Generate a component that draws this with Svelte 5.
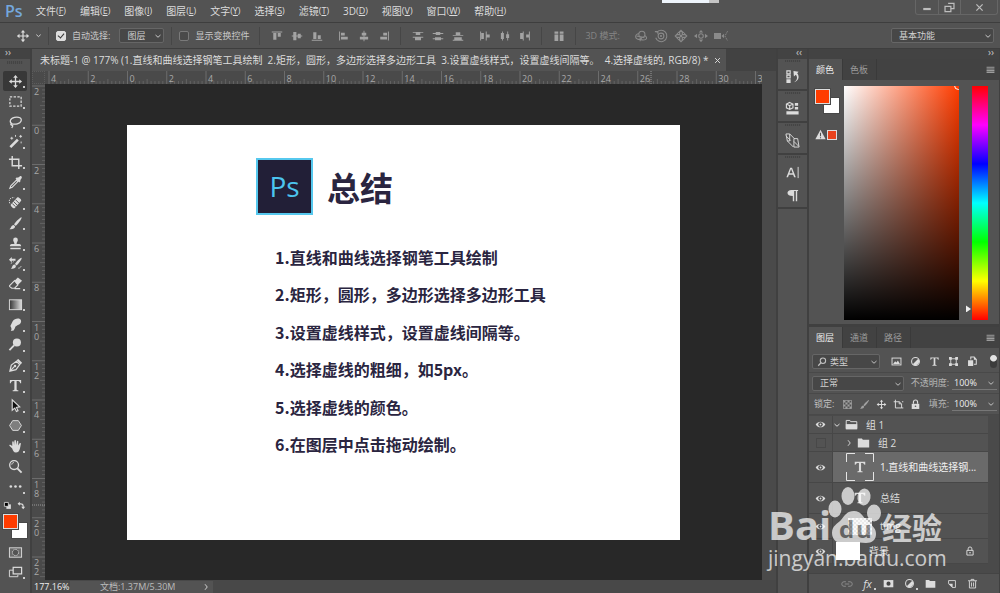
<script>
    const menus = [
        ['文件', 'F'], ['编辑', 'E'], ['图像', 'I'], ['图层', 'L'], ['文字', 'Y'], ['选择', 'S'],
        ['滤镜', 'T'], ['3D', 'D'], ['视图', 'V'], ['窗口', 'W'], ['帮助', 'H'],
    ];

    const line = 'fill="none" stroke="currentColor"';

    // 16x16 glyphs, drawn in currentColor
    const icons = {
        move: `<path d="M8 1l2.500 3H8.700v3.300H12V5.500l3 2.500-3 2.500V8.700H8.700V12h1.800L8 15l-2.500-3h1.800V8.700H4v1.800L1 8l3-2.500v1.800h3.300V4H5.500z"/>`,
        marquee: `<rect x="2" y="3" width="12" height="10" ${line} stroke-width="1.3" stroke-dasharray="2.5 1.500"/>`,
        lasso: `<path d="M4.500 10.500C1 9 2 4.500 7 3.500s8 1 7 4-6.500 4-9.500 3c-1.500-.5-2 .8-1 1.300s2 .2 1.500 1.200L4 15" ${line} stroke-width="1.300"/>`,
        wand: `<path d="M1.500 13L9.500 5l2 2L3.500 15z"/><path d="M4 3v3M2.500 4.500h3M8 1v2M13.500 1v3M12 2.500h3M14 8v2" ${line}/>`,
        crop: `<path d="M4.500 1v10.500H15M1 4.500h10.500V15" ${line} stroke-width="1.500"/>`,
        dropper: `<path d="M8 4l1.500-1.500 1 .5L12.500 1.500c1.500-1 3 .5 2 2L13 5.500l.5 1L12 8z"/><path d="M9 5.500L3 11.500 2 14l2.500-1 6-6z" ${line} stroke-width="1.200"/>`,
        heal: `<path d="M3 10l7-7.500c1-1 5 2.500 4 3.700L7 14c-1 1-5-2.800-4-4z"/><path d="M6 7l4 4M8 5l4 4M4.500 9l3.500 3.500" stroke="#535353"/><path d="M2 9C0 5 3 2 7 3" ${line} stroke-dasharray="1.500 1"/>`,
        brush: `<path d="M14.500 1.500c.8.8-5 8.500-6.500 9L6.500 9C7 7.500 13.500.8 14.500 1.500z M6 9.500L7.500 11c0 3-3.500 3.500-6 3 1.800-.8 1.500-4 4.500-4.500z"/>`,
        stamp: `<path d="M6.800 8.500c.3-1.700-1.300-2.500-1.300-4.300a2.500 2.500 0 015 0c0 1.800-1.600 2.600-1.300 4.300H12c1.500 0 2 1 2 2.500H2c0-1.500.5-2.500 2-2.500z M2.500 12.500h11V14h-11z"/>`,
        history: `<path d="M14.500 2c.8.8-4 7.500-5.500 8L7.500 8.500C8 7 13.800 1.300 14.500 2z M7 9l1.500 1.500c0 3-3 3.500-5.500 3 1.800-.8 1-4 4-4.500z M1 4l3-3v2h4v2H4v2z"/><path d="M3 8l3-2M11 13c2 0 3-1 3-3" ${line} stroke-dasharray="1.500 1"/>`,
        eraser: `<path d="M7 5l3.500-3.500L15 5l-4.500 4.500z"/><path d="M7 5l-5 5c-.6.600-.5 1 .2 1.600L4 13h3l3.500-3.500z M7 13.500h6" ${line} stroke-width="1.200"/>`,
        gradient: `<rect x="1.500" y="3" width="13" height="10.500" fill="url(#ramp)" stroke="currentColor"/>`,
        smudge: `<path d="M2.500 9.500L5 4.500C7 1 13 .5 13.800 3.500S12.500 8 10.500 8.500L8 10c-.5 1.500-1 3-2 4.500L3 15c1-2 1-3-.5-5.500z"/>`,
        dodge: `<circle cx="9.500" cy="5.800" r="4.300"/><path d="M6.500 9l-5 5" ${line} stroke-width="2"/>`,
        pen: `<path d="M2 14l1.500-6.500L9 3.500 12.500 7l-4 5.500z M2 14l5-5" ${line} stroke-width="1.300"/><circle cx="7.500" cy="8.500" r="1.300"/><path d="M9 2.500l2-1.500L15 5l-1.500 2z"/>`,
        type: `<path d="M2 2h12v3.500h-1C12.700 4 12 3.300 9.200 3.300V12c0 .8.500 1 1.800 1v1H5v-1c1.300 0 1.800-.2 1.800-1V3.300C4 3.300 3.300 4 3 5.500H2z"/>`,
        select: `<path d="M4.500 2v11l2.700-2.300L9 14.500l1.700-.8L9 10l3.500-.5z" fill="#111" stroke="currentColor" stroke-width="1.200"/>`,
        polygon: `<path d="M5 2.800h6l3.300 5.200L11 13.200H5L1.700 8z" fill="#7e7e7e" stroke="currentColor"/>`,
        hand: `<path d="M4.500 10L1.500 7.200c-.4-1.200.8-1.300 1.500-.7l1.500 1V3.200c.2-1.300 1.500-1 1.600 0l.4 3.300.3-4.500c.2-1.200 1.600-1.200 1.700 0l.1 4.500.9-3.800c.3-1.200 1.600-.9 1.500.2L10.800 7l1.400-2.300c.7-1 1.800-.4 1.500.6C13 8 13 14.500 8.500 14.500 6 14.500 5.300 12 4.500 10z"/>`,
        zoom: `<circle cx="6.500" cy="6.500" r="4.700" ${line} stroke-width="1.400"/><path d="M4 6c0-1.300 1-2.200 2.300-2.200" ${line}/><path d="M10 10l4.500 4.500" ${line} stroke-width="2"/>`,
        more: `<circle cx="3" cy="8" r="1.400"/><circle cx="8" cy="8" r="1.400"/><circle cx="13" cy="8" r="1.400"/>`,
        defaults: `<path d="M6 6h8v8H6z"/><path d="M2.500 2.500h7v7h-7z" fill="#000" stroke="currentColor" stroke-width="1.500"/>`,
        swap: `<path d="M1 5l4-3.500V4c5 0 7 1 7 6h2.500L11 14.500 7.500 10H10c0-3-1-4-5-4v2.500z"/>`,
        mask: `<rect x="1.500" y="3" width="13" height="10" fill="#6a6a6a" stroke="currentColor"/><circle cx="8" cy="8" r="3.300" fill="#535353" stroke="currentColor" stroke-dasharray="1.500 1"/>`,
        screens: `<path d="M5.500 5.500h-4v7h9v-2" ${line}/><rect x="5.500" y="2.500" width="9" height="7" fill="#535353" stroke="currentColor" stroke-width="1.300"/>`,
        alignTop: `<path d="M1 2h14v1.300H1z M3 4h4.200v9H3z M9 4h4v5H9z"/>`,
        alignMiddle: `<path d="M1 7.400h14v1.200H1z M3 2.500h4.200v11H3z M9 5h4v6H9z"/>`,
        alignBottom: `<path d="M1 13h14v1.300H1z M3 3h4.200v9H3z M9 7h4v5H9z"/>`,
        alignLeft: `<path d="M1.500 2h1.300v12H1.500z M4 3.500h5v3.700H4z M4 9h9v3.700H4z"/>`,
        alignCenter: `<path d="M7.400 1h1.200v14H7.400z M5 3.500h6v3.700H5z M2.500 9h11v3.700h-11z"/>`,
        alignRight: `<path d="M13.200 2h1.300v12h-1.300z M7 3.500h5v3.700H7z M3 9h9v3.700H3z"/>`,
        distTop: `<path d="M1 2.500h14v1.200H1z M5 3.700h6v3H5z M1 9h14v1.200H1z M4 10.200h8v3.300H4z"/>`,
        distMiddle: `<path d="M1 4h14v1.200H1z M5 2.500h6v4H5z M1 11h14v1.200H1z M4 9.500h8v4H4z"/>`,
        distBottom: `<path d="M1 6.500h14v1.200H1z M5 3h6v3.500H5z M1 13h14v1.200H1z M3 9.500h10V13H3z"/>`,
        distLeft: `<path d="M1.500 2h1.300v12H1.500z M3 4h3.500v8H3z M9 2h1.300v12H9z M10.300 6h4v4h-4z"/>`,
        distCenter: `<path d="M4 2h1.200v12H4z M2.500 4h4v8h-4z M11 2h1.200v12H11z M9.500 5.500h4v5h-4z"/>`,
        distRight: `<path d="M5 2h1.300v12H5z M1.500 4H5v8H1.500z M13.200 2h1.300v12h-1.300z M9.500 6h3.700v4H9.500z"/>`,
        autoAlign: `<path d="M2 2h5v3H2z M9 2h5v3H9z M2 6h5v8.500H2z M9 6h5v8.500H9z"/>`,
        orbit: `<circle cx="9" cy="6" r="3.500" ${line} stroke-width="1.200"/><path d="M5.500 5C0 7 1 12 7 12l2-1.500M12.500 7.500c5 4-1 6-5 4.500M7 10v4M3 8l9 2" ${line} stroke-width="1.200"/>`,
        roll: `<circle cx="8" cy="8" r="3.300" ${line} stroke-width="1.200"/><circle cx="8" cy="8" r="1.200"/><path d="M3 4a6.500 6.500 0 11-1 6M1 3h3.500v3" ${line} stroke-width="1.200"/>`,
        pan: `<path d="M8 1.500L10.500 4H9.500v2.500H12V5.500L14.500 8 12 10.500V9.500H9.500V12h1L8 14.500 5.500 12h1V9.500H4v1L1.500 8 4 5.500v1h2.500V4h-1z" ${line} stroke-width="1.400"/><circle cx="8" cy="8" r="1.500"/>`,
        slide: `<circle cx="8" cy="8" r="2.600" ${line} stroke-width="1.200"/><path d="M8 1l2.500 3h-5z M8 15l2.500-3h-5z M0 8l3.500-2.500v5z M16 8l-3.500-2.500v5z"/>`,
        camera: `<path d="M0 4.500h8v7H0z M8.500 8l3-2.500v5z"/><path d="M15.500 2.500L12.500 8l3 5.500" ${line} stroke-dasharray="2 1"/>`,
        actions: `<path d="M2 2h3.500v3H2zM2 6.500h3.500v3H2z" ${line} stroke-width="1.200"/><path d="M1.500 11h4.500v4H1.500z M9.500 14c4-2 4-6 2-8l-2 2L9 2l5.500 1-1.500 1.500c3 3.500 1.500 8.500-3.500 9.500z"/>`,
        props: `<path d="M5 1.500l3.500 1.800v4L5 9 1.500 7.300v-4zM1.500 3.300L5 5l3.500-1.700M5 5v4" ${line} stroke-width="1.200"/><path d="M10.500 2H14v3h-3.500zM10.500 6.500H14v2.500h-3.500zM1.500 11h13v3.500h-13z"/>`,
        clone: `<path d="M1 1h4v7.500H2.500zM5 1l5 5M2.500 8.500L9 15M9.500 6h4l1.500 9H9.500zM1 3l5 5M9.500 9l5 5" ${line}/>`,
        character: `<path d="M5.500 3h2l4 10H9.700l-1-2.700H4.200L3.200 13H1.500z M4.800 8.800h3.400L6.500 4.300z" fill-rule="evenodd"/><path d="M14 2v12" ${line}/>`,
        paragraph: `<path d="M7 2h7v1.300h-1V14h-1.500V3.300H9.800V14H8.300V8.500C1 8.500 1 2 7 2z"/>`,
        image: `<rect x="1.500" y="3" width="13" height="10" ${line} stroke-width="1.400"/><path d="M3 11.500l3-4 2 2 2-3 3 5z"/>`,
        adjust: `<circle cx="8" cy="8" r="5.700" ${line} stroke-width="1.500"/><path d="M12 4a5.700 5.700 0 01-8 8z"/>`,
        shape: `<path d="M4 4h8v8H4z" ${line} stroke-width="1.300"/><path d="M1.500 1.500h4v4h-4zM10.500 1.500h4v4h-4zM1.500 10.500h4v4h-4zM10.500 10.500h4v4h-4z"/>`,
        smart: `<path d="M5.500 5V1.500h5L13.500 5v7H10" ${line} stroke-width="1.500"/><path d="M1.500 6H9v8.500H1.500z M10 1v4.500h4z"/>`,
        checker: `<rect x="2" y="2" width="12" height="12" ${line}/><path d="M2 2h3v3H2zM8 2h3v3H8zM5 5h3v3H5zM11 5h3v3h-3zM2 8h3v3H2zM8 8h3v3H8zM5 11h3v3H5zM11 11h3v3h-3z"/>`,
        artboard: `<path d="M3.500 1v12h9V7L9 4H1M15 4h-2M12.500 13H15M9 4v3h3" ${line} stroke-width="1.400"/>`,
        lock: `<path d="M2.500 7h11v7.500h-11z"/><path d="M5 7V4.500a3 3 0 016 0V7" ${line} stroke-width="1.700"/><circle cx="8" cy="10.500" r="1.200" fill="#535353"/>`,
        lockOpen: `<path d="M3 7h10v7.500H3zM5 7V4.500a3 3 0 016 0V7" ${line} stroke-width="1.500"/><circle cx="8" cy="10.700" r="1.300"/>`,
        eye: `<path d="M1 8c3.500-5.500 10.500-5.500 14 0-3.500 5.500-10.500 5.500-14 0z"/><circle cx="8" cy="8" r="3.200" fill="#474747"/><circle cx="8" cy="8" r="1.400"/>`,
        folder: `<path d="M1 3h5l1.200 1.500H15V14H1z"/>`,
        folderOpen: `<path d="M1.500 13V3h4.500l1 1.500h7.500V13z" ${line} stroke-width="1.200"/><path d="M1 7.500h14V14H1z"/>`,
        link: `<path d="M6.500 5H4a3 3 0 000 6h2.500M9.500 5H12a3 3 0 010 6H9.500M5 8h6" ${line} stroke-width="1.300"/>`,
        addMask: `<path d="M1 3h14v10.500H1z"/><circle cx="8" cy="8.200" r="3" fill="#444"/>`,
        newLayer: `<path d="M2.500 2.500h11v11h-5l-6-6z" ${line} stroke-width="1.400"/><path d="M2.500 7.500H9V14z"/>`,
        trash: `<path d="M3.500 4.500v10h9v-10M1.500 4h13M6 4V2h4v2M6.500 6.500v6M9.500 6.500v6" ${line} stroke-width="1.300"/>`,
        search: `<circle cx="9.500" cy="6" r="4.300" ${line} stroke-width="1.700"/><path d="M6.500 9L2 14" ${line} stroke-width="2"/>`,
        warn: `<path d="M8 1l7.500 14H.5z"/><path d="M8 5.500v5M8 12v1.500" stroke="#535353" stroke-width="1.500"/>`,
        down: `<path d="M3 6l5 4.500L13 6" ${line} stroke-width="2"/>`,
        right: `<path d="M6 2.500l4.500 5.500L6 13.500" ${line} stroke-width="1.800"/>`,
        minimize: `<path d="M2 9.500h12V13H2z"/>`,
        restore: `<path d="M6 2h8.500v7.500H10M1.500 6.500H10V14H1.500z" ${line} stroke-width="1.800"/>`,
        close: `<path d="M2.500 2.500l11 11M13.500 2.500l-11 11" ${line} stroke-width="2.200"/>`,
        list: `<path d="M1 3h14v2H1zM1 6h14v2H1zM1 9h14v2H1zM1 12h14v2H1z"/>`,
    };

    const tools = [
        ['move', '移动工具'], ['marquee', '矩形选框工具'], ['lasso', '套索工具'], ['wand', '魔棒工具'],
        ['crop', '裁剪工具'], ['dropper', '吸管工具'], ['heal', '修复画笔工具'], ['brush', '画笔工具'],
        ['stamp', '仿制图章工具'], ['history', '历史记录画笔'], ['eraser', '橡皮擦工具'], ['gradient', '渐变工具'],
        ['smudge', '涂抹工具'], ['dodge', '减淡工具'], ['pen', '钢笔工具'], ['type', '文字工具'],
        ['select', '路径选择工具'], ['polygon', '多边形工具'], ['hand', '抓手工具'], ['zoom', '缩放工具'],
        ['more', '更多工具'],
    ];

    const alignGroups = [
        ['alignTop', 'alignMiddle', 'alignBottom'],
        ['alignLeft', 'alignCenter', 'alignRight'],
        ['distTop', 'distMiddle', 'distBottom'],
        ['distLeft', 'distCenter', 'distRight'],
    ];

    const dock = [['actions'], ['props'], ['clone'], ['character', 'paragraph']];

    const steps = [
        '1.直线和曲线选择钢笔工具绘制',
        '2.矩形，圆形，多边形选择多边形工具',
        '3.设置虚线样式，设置虚线间隔等。',
        '4.选择虚线的粗细，如5px。',
        '5.选择虚线的颜色。',
        '6.在图层中点击拖动绘制。',
    ];

    const layers = [
        { name: '组 1', kind: 'group', open: true, visible: true },
        { name: '组 2', kind: 'group', nested: true, visible: false },
        { name: '1.直线和曲线选择钢...', kind: 'text', selected: true, visible: true },
        { name: '总结', kind: 'text', visible: true },
        { name: 'timg', kind: 'pixel', visible: true },
        { name: '背景', kind: 'background', visible: true },
    ];

    // ruler geometry: 39.25px for every two units
    const major = 39.25;
    const hTicks = Array.from({ length: 19 }, (_, i) => ({ pos: 4 + i * major, label: Math.abs(i * 2 - 4) }));
    const vTicks = Array.from({ length: 13 }, (_, i) => ({ pos: 2 + i * major, label: String(Math.abs(i * 2 - 2)) }));
    const minor = Array.from({ length: 9 }, (_, i) => i + 1);

    let activeTool = $state('move');
    let hue = $state(12);
</script>

{#snippet icon(name, size = 12)}
    <svg width={size} height={size} viewBox="0 0 16 16" fill="currentColor" aria-hidden="true">{@html icons[name]}</svg>
{/snippet}

{#snippet dropdown(label, value, kind)}
    <span class="dropdown {kind}">
        {#if kind === 'filter'}<span class="lens">{@render icon('search', 10)}</span>{/if}
        <select aria-label={label}><option>{value}</option></select>
        <span class="arrow">{@render icon('down', 8)}</span>
    </span>
{/snippet}

{#snippet percent(label, id)}
    <label class="percent-label" for={id}>{label}</label>
    <span class="percent">
        <input {id} type="text" value="100%" />
        {@render icon('down', 8)}
    </span>
{/snippet}

<svg class="defs" aria-hidden="true">
    <linearGradient id="ramp"><stop offset="0" stop-color="#333" /><stop offset="1" stop-color="#ddd" /></linearGradient>
</svg>

<div class="app">
    <header class="menubar">
        <span class="brand">Ps</span>
        <nav>
            {#each menus as [name, key]}
                <button>{name}<small>(<u>{key}</u>)</small></button>
            {/each}
        </nav>
        <div class="window-buttons">
            <button aria-label="最小化">{@render icon('minimize', 10)}</button>
            <button aria-label="还原">{@render icon('restore', 11)}</button>
            <button class="wide" aria-label="关闭">{@render icon('close', 9)}</button>
        </div>
        <div class="popup"></div>
    </header>

    <div class="options">
        <button class="current" aria-label="移动工具">{@render icon('move', 14)}{@render icon('down', 7)}</button>
        <i class="sep"></i>
        <label class="check"><input type="checkbox" checked />自动选择:</label>
        {@render dropdown('自动选择', '图层', 'target')}
        <i class="sep"></i>
        <label class="check"><input type="checkbox" />显示变换控件</label>
        <i class="sep later"></i>
        {#each alignGroups as group, i}
            <div class="set">
                {#each group as name}
                    <button aria-label={name}>{@render icon(name, 12)}</button>
                {/each}
            </div>
            {#if i % 2}<i class="sep"></i>{/if}
        {/each}
        <button class="auto" aria-label="自动对齐">{@render icon('autoAlign', 12)}</button>
        <i class="sep"></i>
        <span class="mode">3D 模式:</span>
        <div class="set dim">
            {#each ['orbit', 'roll', 'pan', 'slide', 'camera'] as name}
                <button aria-label={name}>{@render icon(name, 14)}</button>
            {/each}
        </div>
        {@render dropdown('工作区', '基本功能', 'workspace')}
    </div>

    <div class="workspace-area">
        <aside class="toolbox">
            <div class="strip left">››</div>
            <div class="grip"></div>
            <div class="tools">
                {#each tools as [name, title]}
                    <button class:active={activeTool === name} aria-label={title} onclick={() => (activeTool = name)}>
                        {@render icon(name, 15)}
                        {#if name !== 'zoom'}<i class="corner"></i>{/if}
                    </button>
                {/each}
            </div>
            <div class="mini">{@render icon('defaults', 9)}{@render icon('swap', 9)}</div>
            <div class="swatches"><i class="back"></i><i class="fore"></i></div>
            <button class="extra" aria-label="快速蒙版">{@render icon('mask', 15)}</button>
            <button class="extra" aria-label="屏幕模式">{@render icon('screens', 15)}<i class="corner"></i></button>
        </aside>

        <main class="document">
            <div class="tabs-row">
                <div class="doc-tab">
                    <span>未标题-1 @ 177% (1.直线和曲线选择钢笔工具绘制&nbsp; 2.矩形，圆形，多边形选择多边形工具&nbsp; 3.设置虚线样式，设置虚线间隔等。&nbsp; 4.选择虚线的, RGB/8) *</span>
                    <button aria-label="关闭文档">{@render icon('close', 7)}</button>
                </div>
            </div>
            <div class="corner-box"></div>
            <svg class="ruler top" aria-hidden="true">
                {#each hTicks as tick}
                    <path class="major" d="M{tick.pos} 0v13" />
                    {#each minor as m}
                        <path d="M{tick.pos + (m * major) / 10} {m === 5 ? 8 : 10}v5" />
                    {/each}
                    <text x={tick.pos + 2} y="11">{tick.label}</text>
                {/each}
                <path class="pointer" d="M606 0v13" />
            </svg>
            <svg class="ruler side" aria-hidden="true">
                {#each vTicks as tick}
                    <path class="major" d="M0 {tick.pos}h13" />
                    {#each minor as m}
                        <path d="M{m === 5 ? 8 : 10} {tick.pos + (m * major) / 10}h5" />
                    {/each}
                    {#each tick.label as digit, i}
                        <text x="2" y={tick.pos + 9 + i * 9}>{digit}</text>
                    {/each}
                {/each}
                <path class="pointer" d="M0 421h13" />
            </svg>
            <div class="canvas">
                <article>
                    <div class="title">
                        <div class="logo">Ps</div>
                        <h1>总结</h1>
                    </div>
                    <div class="steps">
                        {#each steps as step}<p>{step}</p>{/each}
                    </div>
                </article>
            </div>
            <div class="scroller"></div>
            <footer class="status">
                <span class="zoom">177.16%</span>
                <span class="size">文档:1.37M/5.30M</span>
                <span class="next">{@render icon('right', 8)}</span>
            </footer>
        </main>

        <aside class="dock">
            <div class="strip">‹‹</div>
            {#each dock as group}
                <div class="dock-group">
                    <div class="grip"></div>
                    {#each group as name}
                        <button aria-label={name}>{@render icon(name, 15)}</button>
                    {/each}
                </div>
            {/each}
            <div class="rest"></div>
        </aside>

        <aside class="panels">
            <div class="strip">››</div>
            <section class="panel">
                <div class="tabs">
                    <button class="on">颜色</button><button>色板</button>
                    <span class="menu">{@render icon('list', 9)}</span>
                </div>
                <div class="color">
                    <div class="picks">
                        <div class="swatches"><i class="back"></i><i class="fore"></i></div>
                        <div class="gamut">{@render icon('warn', 11)}<i></i></div>
                    </div>
                    <div class="field"><i></i></div>
                    <input class="hue" type="range" min="0" max="360" bind:value={hue} aria-label="色相" />
                </div>
            </section>

            <section class="panel layers-panel">
                <div class="tabs">
                    <button class="on">图层</button><button>通道</button><button>路径</button>
                    <span class="menu">{@render icon('list', 9)}</span>
                </div>
                <div class="row filters">
                    {@render dropdown('筛选', '类型', 'filter')}
                    {#each ['image', 'adjust', 'type', 'shape', 'smart'] as name}
                        <button aria-label={name}>{@render icon(name, 11)}</button>
                    {/each}
                    <i class="toggle"></i>
                </div>
                <div class="row">
                    {@render dropdown('混合模式', '正常', 'blend')}
                    {@render percent('不透明度:', 'opacity')}
                </div>
                <div class="row locks">
                    <span>锁定:</span>
                    {#each ['checker', 'brush', 'move', 'artboard', 'lock'] as name}
                        <button aria-label={name}>{@render icon(name, 11)}</button>
                    {/each}
                    {@render percent('填充:', 'fill')}
                </div>
                <ul>
                    {#each layers as layer}
                        <li class={layer.kind} class:selected={layer.selected}>
                            <button class="eye" aria-label="可见性">
                                {#if layer.visible}{@render icon('eye', 11)}{:else}<i class="blank"></i>{/if}
                            </button>
                            <div class="layer" class:nested={layer.nested}>
                                {#if layer.kind === 'group'}
                                    {@render icon(layer.open ? 'down' : 'right', 8)}
                                    {@render icon(layer.open ? 'folderOpen' : 'folder', 13)}
                                {:else if layer.kind === 'text'}
                                    <span class="thumb">
                                        {@render icon('type', 14)}
                                        {#if layer.selected}
                                            <svg class="frame" viewBox="0 0 28 28"><path d="M.5 9V.5H9M19 .5h8.500V9M27.500 19v8.500H19M9 27.500H.5V19" fill="none" stroke="#e4e4e4" /></svg>
                                        {/if}
                                    </span>
                                {:else}
                                    <span class="thumb {layer.kind}"></span>
                                {/if}
                                <span class="name">{layer.name}</span>
                                {#if layer.kind === 'background'}<span class="locked">{@render icon('lockOpen', 10)}</span>{/if}
                            </div>
                        </li>
                    {/each}
                </ul>
                <div class="actions">
                    <button class="off" aria-label="链接图层">{@render icon('link', 12)}</button>
                    <button class="fx">fx<i class="corner"></i></button>
                    <button aria-label="添加蒙版">{@render icon('addMask', 11)}</button>
                    <button aria-label="调整图层">{@render icon('adjust', 11)}<i class="corner"></i></button>
                    <button aria-label="新建组">{@render icon('folder', 11)}</button>
                    <button aria-label="新建图层">{@render icon('newLayer', 10)}</button>
                    <button aria-label="删除图层">{@render icon('trash', 11)}</button>
                </div>
            </section>
        </aside>
    </div>

    <div class="watermark">
        <div class="wm-top">
            <span class="bai">Bai</span>
            <svg width="54" height="58" viewBox="0 0 54 58">
                <ellipse cx="7" cy="22" rx="6.500" ry="8.500" />
                <ellipse cx="20" cy="9" rx="6.500" ry="9" />
                <ellipse cx="36" cy="10" rx="6.500" ry="8.500" transform="rotate(10 36 10)" />
                <ellipse cx="46" cy="26" rx="7" ry="8.500" />
                <path d="M26 24c7 0 9 6 13 10 7 6 9 8 9 13 0 6-4 9-10 9-5 0-8-1-12-1s-7 1-12 1C8 56 4 52 4 46c0-7 5-9 9-13 4-5 6-9 13-9z" />
                <text x="11" y="51">d</text>
                <text x="28" y="51">u</text>
            </svg>
            <span class="exp">经验</span>
        </div>
        <div class="url">jingyan.baidu.com</div>
    </div>
</div>

<style>
    :global(body) {
        margin: 0;
        background: #535353;
    }

    .app {
        position: relative;
        display: flex;
        flex-direction: column;
        min-height: 100vh;
        overflow: hidden;
        background: #535353;
        color: #dcdcdc;
        font: 9px/12px "Open Sans", "Noto Sans CJK SC", sans-serif;
    }

    .app * {
        box-sizing: border-box;
    }

    .defs {
        position: absolute;
        width: 0;
        height: 0;
    }

    svg {
        display: block;
        flex: none;
    }

    button {
        display: flex;
        align-items: center;
        justify-content: center;
        padding: 0;
        border: 0;
        background: none;
        color: inherit;
        font: inherit;
    }

    /* menu bar */
    .menubar {
        position: relative;
        display: flex;
        align-items: center;
        height: 23px;
        padding-right: 2px;
        border-bottom: 1px solid #3e3e3e;
    }

    .brand {
        width: 36px;
        padding-left: 5px;
        color: #74a7dc;
        font-size: 16px;
        font-weight: 600;
    }

    nav {
        display: flex;
        flex: 1;
        gap: 14px;
        font-size: 10px;
    }

    nav small {
        font-size: 9px;
    }

    .window-buttons {
        display: flex;
        align-self: flex-start;
        height: 15px;
        border: 1px solid #666;
        border-top: 0;
        border-radius: 0 0 3px 3px;
        color: #bdbdbd;
    }

    .window-buttons button {
        width: 22px;
    }

    .window-buttons button + button {
        border-left: 1px solid #666;
    }

    .window-buttons .wide {
        width: 37px;
    }

    .popup {
        position: absolute;
        top: 0;
        left: 66%;
        width: 57px;
        height: 3px;
        margin-left: 2px;
        background: linear-gradient(to right, #eef4fb 47px, #c4c4c4 47px);
    }

    /* options bar */
    .options {
        display: flex;
        align-items: center;
        height: 26px;
        padding: 0 6px 0 16px;
        border-bottom: 1px solid #3e3e3e;
        color: #c8c8c8;
    }

    .current {
        gap: 5px;
        width: 26px;
        color: #dcdcdc;
    }

    .sep {
        width: 1px;
        height: 18px;
        margin: 0 7px 0 6px;
        background: #464646;
    }

    .sep.later {
        margin-left: 10px;
    }

    .check {
        display: flex;
        align-items: center;
        gap: 6px;
    }

    .check input {
        position: relative;
        width: 10px;
        height: 10px;
        margin: 0;
        appearance: none;
        border: 1px solid #7a7a7a;
        border-radius: 2px;
        background: #4a4a4a;
    }

    .check input:checked {
        border-color: #ddd;
        background: #ddd;
    }

    .check input:checked::after {
        content: '';
        position: absolute;
        top: 0;
        left: 2px;
        width: 3px;
        height: 5px;
        border: solid #333;
        border-width: 0 1px 1px 0;
        transform: rotate(40deg);
    }

    .dropdown {
        position: relative;
        display: flex;
        height: 15px;
    }

    .dropdown select {
        width: 100%;
        padding: 0 7px;
        appearance: none;
        border: 1px solid #666;
        border-radius: 2px;
        outline: 0;
        background: #474747;
        color: #d0d0d0;
        font: inherit;
    }

    .arrow,
    .lens {
        position: absolute;
        top: 4px;
        right: 2px;
        pointer-events: none;
    }

    .lens {
        top: 3px;
        left: 5px;
    }

    .target {
        width: 45px;
        margin: 0 1px 0 9px;
    }

    .workspace {
        width: 103px;
        margin-left: auto;
    }

    .filter {
        width: 68px;
    }

    .filter select {
        padding-left: 17px;
    }

    .blend {
        width: 92px;
    }

    .set {
        display: flex;
        margin-right: 7px;
        color: #a3a3a3;
    }

    .set:has(+ .sep) {
        margin-right: 0;
    }

    .set button {
        width: 20px;
    }

    .auto {
        width: 20px;
        color: #a3a3a3;
    }

    .mode {
        margin: 0 11px 0 2px;
        color: #858585;
    }

    .dim {
        color: #8a8a8a;
    }

    /* main area */
    .workspace-area {
        display: grid;
        flex: 1;
        grid-template-columns: 30px minmax(0, 1fr) 29px 191px;
        column-gap: 2px;
        background: #404040;
    }

    .strip {
        height: 10px;
        padding-right: 5px;
        background: #434343;
        color: #c8c8c8;
        font-size: 10px;
        line-height: 7px;
        text-align: right;
    }

    .strip.left {
        padding-left: 5px;
        text-align: left;
    }

    .grip {
        width: 16px;
        height: 3px;
        margin: 2px auto;
        background: repeating-linear-gradient(to right, #444 0 1px, #505050 1px 2px);
    }

    .toolbox {
        display: flex;
        flex-direction: column;
        background: #535353;
    }

    .tools {
        display: grid;
        flex: 1;
        grid-auto-rows: 1fr;
        margin-top: 5px;
    }

    .tools button,
    .extra {
        position: relative;
        width: 24px;
        margin: 0 3px;
    }

    .tools .active {
        border-radius: 2px;
        background: #383838;
    }

    .corner {
        position: absolute;
        right: 2px;
        bottom: 3px;
        width: 2px;
        height: 2px;
        background: #ccc;
    }

    .mini {
        display: flex;
        justify-content: space-between;
        padding: 4px 4px 4px 3px;
    }

    .swatches {
        position: relative;
        width: 24px;
        height: 24px;
        margin: 0 3px;
    }

    .swatches i {
        position: absolute;
        width: 15px;
        height: 15px;
        outline: 1px solid #484848;
    }

    .swatches .fore {
        top: 0;
        left: 0;
        border: 1px solid #ddd;
        background: #ff3c00;
    }

    .swatches .back {
        right: 0;
        bottom: 0;
        background: #fff;
    }

    .extra {
        height: 20px;
        margin-top: 4px;
    }

    .extra + .extra {
        margin: 0 3px 11px;
    }

    /* document window */
    .document {
        display: grid;
        grid-template-rows: 22px 13px 1fr 13px;
        grid-template-columns: 13px minmax(0, 1fr) 14px;
        background: #4a4a4a;
    }

    .tabs-row {
        display: flex;
        grid-column: 1 / -1;
        background: #424242;
    }

    .doc-tab {
        display: flex;
        align-items: center;
        gap: 5px;
        padding: 0 5px 0 8px;
        background: #535353;
        font-size: 10px;
        white-space: nowrap;
    }

    .corner-box {
        border: 1px dotted #5c5c5c;
    }

    .ruler {
        width: 100%;
        height: 13px;
        background: #4a4a4a;
        fill: #a8a8a8;
        font-size: 9px;
        stroke: none;
    }

    .ruler path {
        stroke: #636363;
    }

    .ruler .major {
        stroke: #6c6c6c;
    }

    .ruler .pointer {
        stroke: #999;
        stroke-dasharray: 1 1;
    }

    .top {
        grid-column: 2;
    }

    .side {
        grid-column: 1;
        width: 13px;
        height: 100%;
    }

    .canvas {
        display: flex;
        padding: 41px 82px 40px;
        background: #282828;
    }

    article {
        display: flex;
        flex: 1;
        flex-direction: column;
        padding: 33px 120px 78px 129px;
        background: #fff;
        color: #2a2540;
        font-family: "Noto Sans CJK SC", sans-serif;
    }

    .title {
        display: flex;
        align-items: center;
        gap: 14px;
    }

    .logo {
        width: 57px;
        height: 57px;
        border: 2px solid #56c8ee;
        background: #221f37;
        color: #4cc4ee;
        font: 28px/52px "Open Sans", sans-serif;
        text-align: center;
    }

    h1 {
        margin: 0;
        font-size: 33px;
        font-weight: 700;
        line-height: 48px;
    }

    .steps {
        display: flex;
        flex: 1;
        flex-direction: column;
        justify-content: space-between;
        margin-top: 24px;
        padding-left: 19px;
    }

    .steps p {
        margin: 0;
        font-size: 16px;
        font-weight: 700;
        line-height: 36px;
        white-space: nowrap;
    }

    .status {
        display: flex;
        grid-column: 1 / -1;
        align-items: center;
        background: #484848;
    }

    .status span {
        background: #535353;
    }

    .status .zoom {
        width: 38px;
        padding-left: 2px;
        background: #4a4a4a;
        color: #eee;
    }

    .status .size {
        width: 132px;
        padding-left: 30px;
        color: #bbb;
    }

    .status .next {
        width: 11px;
        height: 12px;
        padding-top: 2px;
    }

    /* collapsed dock */
    .dock {
        display: flex;
        flex-direction: column;
        background: #404040;
    }

    .dock-group {
        padding-bottom: 1px;
        margin-bottom: 2px;
        background: #535353;
    }

    .dock-group .grip {
        margin-top: 0;
        border-top: 1px solid #535353;
    }

    .dock-group button {
        width: 100%;
        height: 22px;
    }

    .dock-group .grip + button {
        height: 24px;
    }

    .rest {
        flex: 1;
        background: #535353;
    }

    /* panels */
    .panels {
        display: flex;
        flex-direction: column;
        padding-right: 1px;
    }

    .panel {
        background: #535353;
    }

    .tabs {
        display: flex;
        height: 21px;
        background: #424242;
        color: #9c9c9c;
    }

    .tabs button {
        padding: 0 8px 0 7px;
        border-right: 1px solid #3a3a3a;
    }

    .tabs .on {
        background: #535353;
        color: #eee;
    }

    .menu {
        margin: 6px 4px 0 auto;
    }

    .color {
        display: grid;
        grid-template-columns: 24px minmax(0, 1fr) 24px;
        gap: 5px;
        height: 244px;
        padding: 6px 11px 4px 6px;
    }

    .picks .swatches {
        margin: 3px 0 16px;
    }

    .gamut {
        display: flex;
        align-items: center;
        gap: 1px;
    }

    .gamut i {
        width: 10px;
        height: 10px;
        border: 1px solid #ddd;
        background: #e8421c;
    }

    .field {
        position: relative;
        overflow: hidden;
        background: linear-gradient(to bottom, transparent, #000), linear-gradient(to right, #fff, #ff3c00);
    }

    .field i {
        position: absolute;
        top: -5px;
        right: -4px;
        width: 9px;
        height: 9px;
        border: 1px solid #fff;
        border-radius: 50%;
    }

    .hue {
        width: 24px;
        height: 234px;
        margin: 0;
        appearance: none;
        writing-mode: vertical-lr;
        direction: rtl;
        background: linear-gradient(to top, #f00, #ff0, #0f0, #0ff, #00f, #f0f, #f00) right / 16px 100% no-repeat;
    }

    .hue::-webkit-slider-thumb {
        width: 24px;
        height: 7px;
        appearance: none;
        background: #eee;
        clip-path: polygon(2px 0, 7px 50%, 2px 100%);
    }

    .layers-panel {
        display: flex;
        flex: 1;
        flex-direction: column;
        margin-top: 3px;
    }

    .row {
        display: flex;
        align-items: center;
        height: 21px;
        padding: 0 2px 0 3px;
        border-bottom: 1px solid #494949;
        color: #c0c0c0;
    }

    .row.filters {
        height: 25px;
        padding-top: 3px;
    }

    .filters .dropdown {
        margin-right: 7px;
    }

    .row button {
        width: 19px;
        color: #dcdcdc;
    }

    .toggle {
        width: 7px;
        height: 13px;
        margin-left: auto;
        border-radius: 4px;
        background: radial-gradient(circle at 50% 3px, #e4e4e4 3px, #3c3c3c 4px);
    }

    .locks span:first-child {
        width: 27px;
        padding-left: 2px;
    }

    .locks button {
        width: 17px;
    }

    .locks button:nth-child(2),
    .locks button:nth-child(3) {
        color: #a0a0a0;
    }

    .percent-label {
        margin-left: auto;
        color: #b4b4b4;
    }

    .percent {
        display: flex;
        align-items: center;
        width: 45px;
        margin-left: 3px;
        border-bottom: 1px solid #777;
    }

    .percent input {
        width: 35px;
        height: 13px;
        padding: 0 0 0 2px;
        border: 0;
        background: none;
        color: #eee;
        font: inherit;
    }

    ul {
        flex: 1;
        margin: 0;
        padding: 1px 11px 0 0;
        background: #4a4a4a;
        list-style: none;
    }

    li {
        display: flex;
        height: 25px;
        border-bottom: 1px solid #474747;
        background: #535353;
    }

    li.group {
        height: 18px;
    }

    li.text {
        height: 31px;
    }

    .eye {
        width: 24px;
        border-right: 1px solid #474747;
    }

    .blank {
        width: 10px;
        height: 10px;
        border: 1px solid #484848;
    }

    .layer {
        display: flex;
        flex: 1;
        align-items: center;
        gap: 4px;
    }

    .group .nested {
        padding-left: 12px;
    }

    .group .name {
        padding-left: 4px;
    }

    .selected .layer {
        background: #6a6a6a;
    }

    .thumb {
        position: relative;
        display: flex;
        align-items: center;
        justify-content: center;
        width: 28px;
        height: 28px;
        margin-left: 13px;
    }

    .thumb.pixel {
        width: 24px;
        height: 17px;
        margin: 0 4px 0 15px;
        background: repeating-conic-gradient(#bbb 0 25%, #eee 0 50%) 0 0 / 4px 4px;
    }

    .thumb.background {
        width: 24px;
        height: 18px;
        margin: 0 5px 0 3px;
        background: #fff;
    }

    .frame {
        position: absolute;
        inset: 0;
    }

    .text .name {
        padding-left: 2px;
    }

    .name {
        font-size: 10px;
        white-space: nowrap;
    }

    .selected .name {
        color: #f0f0f0;
    }

    .locked {
        margin: 0 13px 0 auto;
    }

    .actions {
        display: flex;
        justify-content: flex-end;
        height: 20px;
        padding-right: 16px;
        border-top: 1px solid #444;
    }

    .actions button {
        position: relative;
        width: 21px;
    }

    .actions .off {
        color: #8c8c8c;
    }

    .actions .fx {
        font-size: 11px;
        font-style: italic;
    }

    /* stamp over the lower right corner */
    .watermark {
        position: absolute;
        right: 54px;
        bottom: 22px;
        width: 178px;
        color: #fff;
        opacity: 0.7;
        pointer-events: none;
        white-space: nowrap;
    }

    .wm-top {
        display: flex;
        align-items: flex-end;
    }

    .wm-top svg {
        fill: #fff;
    }

    .wm-top text {
        fill: #6a6a6a;
        font-size: 24px;
        font-weight: 700;
    }

    .bai {
        width: 60px;
        font: 700 40px/40px "Open Sans", sans-serif;
    }

    .exp {
        font-size: 30px;
        font-weight: 700;
        line-height: 34px;
    }

    .url {
        font-size: 21px;
        line-height: 26px;
    }
</style>
